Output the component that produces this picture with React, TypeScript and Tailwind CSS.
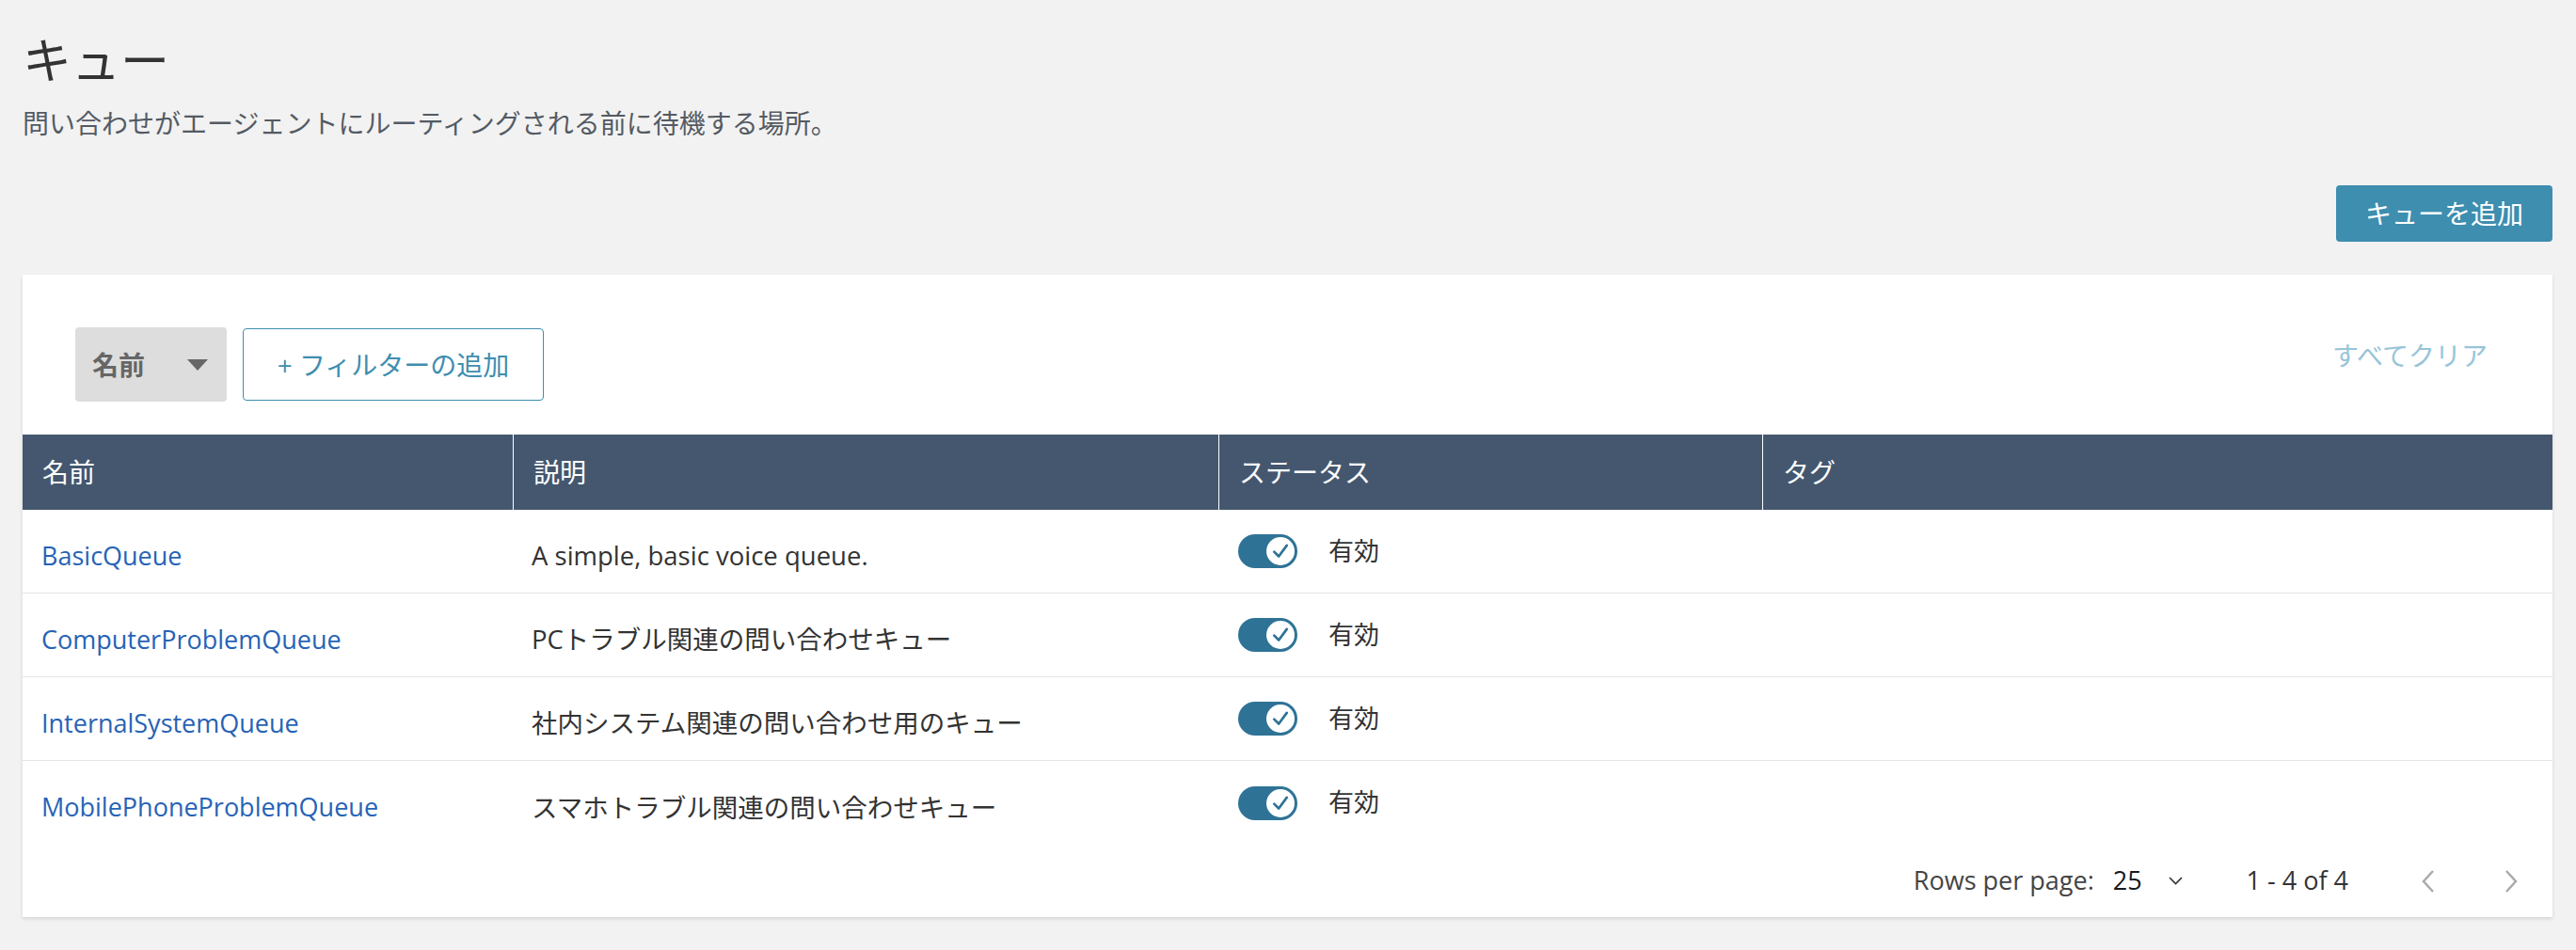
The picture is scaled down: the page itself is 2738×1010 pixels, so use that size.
import React from "react";

const queues = [
  { name: "BasicQueue", description: "A simple, basic voice queue." },
  { name: "ComputerProblemQueue", description: "PCトラブル関連の問い合わせキュー" },
  { name: "InternalSystemQueue", description: "社内システム関連の問い合わせ用のキュー" },
  { name: "MobilePhoneProblemQueue", description: "スマホトラブル関連の問い合わせキュー" },
];

const columns = ["名前", "説明", "ステータス", "タグ"];

function Toggle() {
  return (
    <div className="flex h-[36px] w-[63px] items-center justify-end rounded-full bg-[#2e7396] pr-[3px]">
      <div className="flex h-[30px] w-[30px] items-center justify-center rounded-full bg-white">
        <svg width="22" height="22" viewBox="0 0 18 18" fill="none">
          <path
            d="M3.5 9.5 L7.5 13.5 L14.5 4"
            stroke="#2e7396"
            strokeWidth="2.2"
            strokeLinecap="round"
            strokeLinejoin="round"
          />
        </svg>
      </div>
    </div>
  );
}

export default function App() {
  return (
    <div className="min-h-screen bg-[#f2f2f2] px-[24px] pr-[25px] pt-[33px] font-['Open_Sans','Noto_Sans_CJK_JP',sans-serif]">
      <h1 className="text-[52px] leading-[62px] text-[#333]">キュー</h1>
      <p className="mt-[16px] text-[28px] leading-[40px] text-[#545b64]">
        問い合わせがエージェントにルーティングされる前に待機する場所。
      </p>

      <div className="mt-[46px] flex justify-end">
        <button className="h-[60px] w-[230px] rounded-[4px] bg-[#3e8eb0] text-[28px] text-white">
          キューを追加
        </button>
      </div>

      <div className="mt-[35px] h-[683px] bg-white shadow-[0_2px_4px_rgba(0,0,0,0.12)]">
        <div className="flex items-center pl-[56px] pr-[69px] pt-[56px]">
          <div className="flex h-[79px] w-[161px] items-center justify-between rounded-[4px] bg-[#dddddd] pl-[18px] pr-[20px]">
            <span className="text-[28px] font-bold text-[#666]">名前</span>
            <svg width="22" height="12" viewBox="0 0 22 12">
              <path d="M0 0 H22 L11 12 Z" fill="#666" />
            </svg>
          </div>
          <button className="ml-[17px] h-[77px] w-[320px] rounded-[4px] border-[1.5px] border-[#3e8eb0] text-[28px] text-[#3e8eb0]">
            + フィルターの追加
          </button>
          <span className="-mt-[20px] ml-auto text-[28px] text-[#98c5d8]">すべてクリア</span>
        </div>

        <div className="mt-[35px]">
          <div className="grid h-[80px] grid-cols-[521px_750px_578px_1fr] bg-[#44576f]">
            {columns.map((c, i) => (
              <div
                key={c}
                className={`flex items-center px-[21px] text-[28px] text-white ${
                  i > 0 ? "border-l border-white" : ""
                }`}
              >
                {c}
              </div>
            ))}
          </div>

          {queues.map((q, i) => (
            <div
              key={q.name}
              className={`grid h-[89px] grid-cols-[521px_750px_578px_1fr] ${
                i < queues.length - 1 ? "border-b border-[#e6e6e6]" : ""
              }`}
            >
              <div className="flex items-center px-[20px] pt-[10px] text-[27px]">
                <a className="text-[#2763b6]">{q.name}</a>
              </div>
              <div className="flex items-center px-[20px] pt-[10px] text-[27.5px] text-[#333]">
                {q.description}
              </div>
              <div className="flex items-center gap-[33px] px-[21px]">
                <Toggle />
                <span className="text-[27px] text-[#333]">有効</span>
              </div>
              <div />
            </div>
          ))}

          <div className="flex h-[77px] items-center justify-end pr-[36px] text-[27px]">
            <span className="text-[#444]">Rows per page:</span>
            <span className="ml-[20px] text-[#16191f]">25</span>
            <svg className="ml-[28px]" width="15" height="9" viewBox="0 0 15 9" fill="none">
              <path d="M1 1 L7.5 7.5 L14 1" stroke="#333" strokeWidth="1.6" />
            </svg>
            <span className="ml-[68px] text-[#333]">1 - 4 of 4</span>
            <svg className="ml-[77px]" width="15" height="24" viewBox="0 0 15 24" fill="none">
              <path d="M13 1 L3 12 L13 23" stroke="#aaa" strokeWidth="2.5" />
            </svg>
            <svg className="ml-[74px]" width="15" height="24" viewBox="0 0 15 24" fill="none">
              <path d="M2 1 L12 12 L2 23" stroke="#aaa" strokeWidth="2.5" />
            </svg>
          </div>
        </div>
      </div>
    </div>
  );
}
